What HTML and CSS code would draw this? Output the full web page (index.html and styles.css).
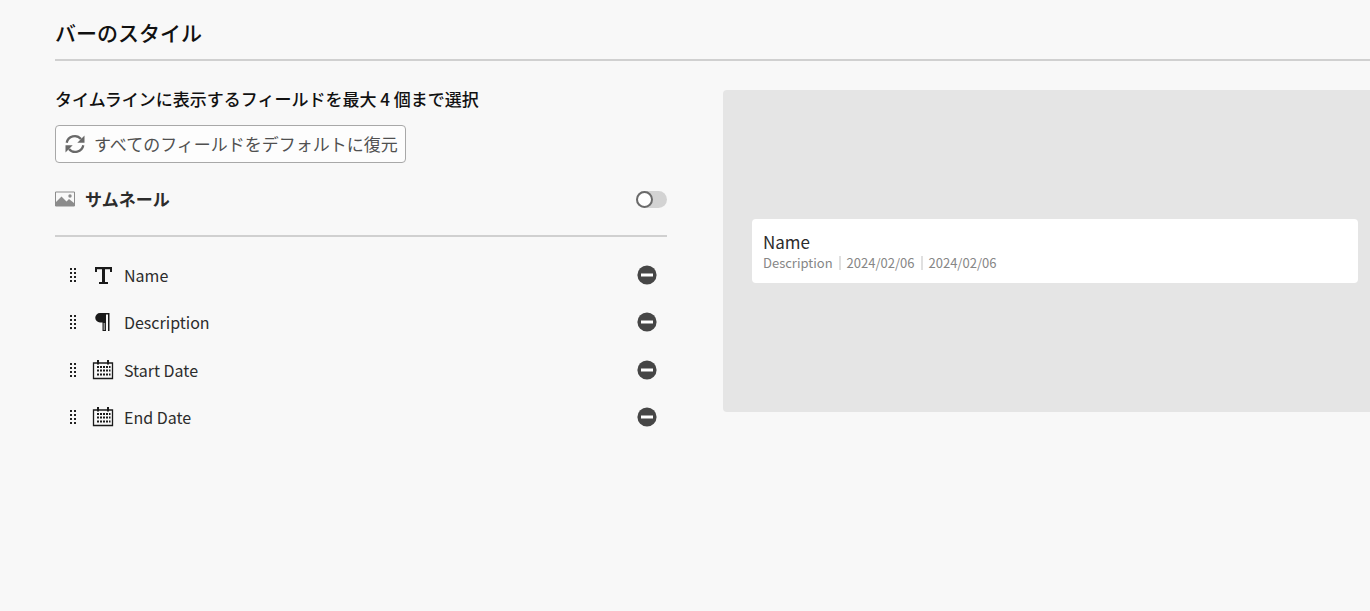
FILE: index.html
```html
<!DOCTYPE html>
<html lang="ja">
<head>
<meta charset="utf-8">
<meta name="viewport" content="width=device-width, initial-scale=1">
<title>バーのスタイル</title>
<link rel="stylesheet" href="styles.css">
</head>
<body>
<svg class="sprite" aria-hidden="true">
  <symbol id="grip" viewBox="0 0 6 14">
    <path d="M0 0h2v2H0zM4 0h2v2H4zM0 4h2v2H0zM4 4h2v2H4zM0 8h2v2H0zM4 8h2v2H4zM0 12h2v2H0zM4 12h2v2H4z"/>
  </symbol>
  <symbol id="calendar" viewBox="0 0 22 20">
    <path d="M1.500 3h19v15.500h-19z" fill="none" stroke="currentColor" stroke-width="1.300"/>
    <path d="M5 0h2v4.500H5zM15 0h2v4.500h-2z"/>
    <path d="M8 6h2v2H8zM11 6h2v2h-2zM14 6h2v2h-2zM17 6h1.500v2H17zM5 6h2v2H5zM5 9.500h2v2H5zM8 9.500h2v2H8zM11 9.500h2v2h-2zM14 9.500h2v2h-2zM17 9.500h1.500v2H17zM5 13.500h2v2H5zM8 13.500h2v2H8zM11 13.500h2v2h-2zM14 13.500h2v2h-2zM17 13.500h1.500v2H17z"/>
  </symbol>
  <symbol id="remove" viewBox="0 0 20 20">
    <circle cx="10" cy="10" r="9.600" fill="#464646"/>
    <path d="M4 8.500h12v3H4z" fill="#fff"/>
  </symbol>
</svg>
<main class="page">
  <h1 class="title">バーのスタイル</h1>
  <div class="columns">
    <section class="settings">
      <h2 class="subtitle">タイムラインに表示するフィールドを最大 4 個まで選択</h2>
      <button class="restore" type="button">
        <svg class="restore-icon" viewBox="0 0 20 20" aria-hidden="true">
          <path d="M1.700 8.800A8.200 8.200 0 0 1 16 5M18.300 11.200A8.200 8.200 0 0 1 4 15" fill="none" stroke="currentColor" stroke-width="2.300"/>
          <path d="M19.500 1.500v7.200h-7.200zM.5 18.500v-7.200h7.200z" fill="currentColor"/>
        </svg>
        <span>すべてのフィールドをデフォルトに復元</span>
      </button>
      <div class="thumbnail">
        <svg class="image-icon" viewBox="0 0 20 16" aria-hidden="true">
          <path d="M.5 1h19v14H.5z" fill="none" stroke="#8c8c8c"/>
          <path d="M1 11l5.500-5.500 5 5L14 8l5 4v3H1z" fill="#8c8c8c"/>
          <circle cx="15" cy="5" r="1.700" fill="#8c8c8c"/>
        </svg>
        <label class="thumbnail-label" for="thumb">サムネール</label>
        <input class="switch" id="thumb" type="checkbox" role="switch">
      </div>
      <ul class="fields">
        <li class="field">
          <svg class="grip" aria-hidden="true"><use href="#grip"/></svg>
          <svg class="field-icon" viewBox="0 0 22 20" aria-hidden="true"><path d="M3 2h17v5h-2V4.200h-5V17h3v2H7v-2h3V4.200H5V7H3z"/></svg>
          <span class="field-name">Name</span>
          <button class="remove" type="button" aria-label="Name"><svg class="remove-icon" aria-hidden="true"><use href="#remove"/></svg></button>
        </li>
        <li class="field">
          <svg class="grip" aria-hidden="true"><use href="#grip"/></svg>
          <svg class="field-icon" viewBox="0 0 22 20" aria-hidden="true"><path d="M8 1h9.500v18H16V2.500h-2V19h-3.500v-8.500H8A4.700 4.700 0 0 1 8 1z"/><path d="M11.500 11h1.600v7h-1.600z" fill="#909090"/></svg>
          <span class="field-name">Description</span>
          <button class="remove" type="button" aria-label="Description"><svg class="remove-icon" aria-hidden="true"><use href="#remove"/></svg></button>
        </li>
        <li class="field">
          <svg class="grip" aria-hidden="true"><use href="#grip"/></svg>
          <svg class="field-icon" aria-hidden="true"><use href="#calendar"/></svg>
          <span class="field-name">Start Date</span>
          <button class="remove" type="button" aria-label="Start Date"><svg class="remove-icon" aria-hidden="true"><use href="#remove"/></svg></button>
        </li>
        <li class="field">
          <svg class="grip" aria-hidden="true"><use href="#grip"/></svg>
          <svg class="field-icon" aria-hidden="true"><use href="#calendar"/></svg>
          <span class="field-name">End Date</span>
          <button class="remove" type="button" aria-label="End Date"><svg class="remove-icon" aria-hidden="true"><use href="#remove"/></svg></button>
        </li>
      </ul>
    </section>
    <section class="preview">
      <article class="bar">
        <div class="bar-name">Name</div>
        <div class="bar-details">
          <span>Description</span>
          <span class="bar-date">2024/02/06</span>
          <span class="bar-date">2024/02/06</span>
        </div>
      </article>
    </section>
  </div>
</main>
</body>
</html>
```
FILE: styles.css
```css
*,
*::before {
  box-sizing: border-box;
}

body {
  margin: 0;
  background: #f8f8f8;
  color: #2c2c2c;
  font-family: "Noto Sans CJK JP", sans-serif;
  font-size: 17px;
  line-height: 24px;
}

button {
  font: inherit;
  color: inherit;
}

.sprite {
  position: absolute;
  width: 0;
  height: 0;
}

.page {
  padding: 16px 0 0 55px;
}

.title {
  margin: 0;
  padding-bottom: 11px;
  border-bottom: 2px solid #d0d0d0;
  color: #111;
  font-size: 21px;
  font-weight: 500;
  line-height: 32px;
}

.columns {
  display: grid;
  grid-template-columns: 612fr 647fr;
  column-gap: 56px;
  padding-top: 26px;
}

.settings {
  display: flex;
  flex-direction: column;
}

.subtitle {
  margin: 0 0 14px;
  color: #111;
  font-size: 17px;
  font-weight: 500;
  line-height: 24px;
}

.restore {
  display: flex;
  align-items: center;
  align-self: flex-start;
  gap: 9px;
  height: 38px;
  padding: 0 7px 0 9px;
  border: 1px solid #a8a8a8;
  border-radius: 4px;
  background: #fdfdfd;
  color: #505050;
}

.restore-icon {
  width: 20px;
  height: 20px;
  color: #696969;
}

.thumbnail {
  display: flex;
  align-items: center;
  gap: 10px;
  height: 74px;
  border-bottom: 2px solid #d0d0d0;
}

.image-icon {
  width: 20px;
  height: 16px;
}

.thumbnail-label {
  font-weight: 700;
}

.switch {
  appearance: none;
  display: flex;
  width: 31px;
  height: 17px;
  margin: 0 0 0 auto;
  border-radius: 9px;
  background: #d3d3d3;
}

.switch::before {
  content: "";
  width: 17px;
  height: 17px;
  border: 2px solid #6a6a6a;
  border-radius: 50%;
  background: #fff;
}

.switch:checked {
  justify-content: flex-end;
}

.fields {
  display: grid;
  grid-auto-rows: 1fr;
  height: 190px;
  margin: 14px 0 0;
  padding: 0;
  list-style: none;
}

.field {
  display: flex;
  align-items: center;
  padding: 0 10px 0 15px;
  font-size: 16px;
}

.grip {
  width: 6px;
  height: 14px;
  fill: #222;
}

.field-icon {
  width: 22px;
  height: 20px;
  margin: 0 10px 0 16px;
  color: #1a1a1a;
  fill: #1a1a1a;
}

.remove {
  display: flex;
  margin-left: auto;
  padding: 0;
  border: 0;
  background: none;
}

.remove-icon {
  width: 20px;
  height: 20px;
}

.preview {
  display: flex;
  flex-direction: column;
  justify-content: center;
  height: 322px;
  margin-top: 3px;
  padding: 0 12px 0 29px;
  border-radius: 4px 0 0 4px;
  background: #e5e5e5;
}

.bar {
  padding: 12px 11px 10px;
  border-radius: 4px;
  background: #fff;
}

.bar-name {
  line-height: 22px;
}

.bar-details {
  display: flex;
  align-items: center;
  color: #868686;
  font-size: 13px;
  line-height: 20px;
}

.bar-date {
  display: flex;
  align-items: center;
}

.bar-date::before {
  content: "";
  width: 2px;
  height: 14px;
  margin: 0 6px;
  background: #e0e0e0;
}
```
